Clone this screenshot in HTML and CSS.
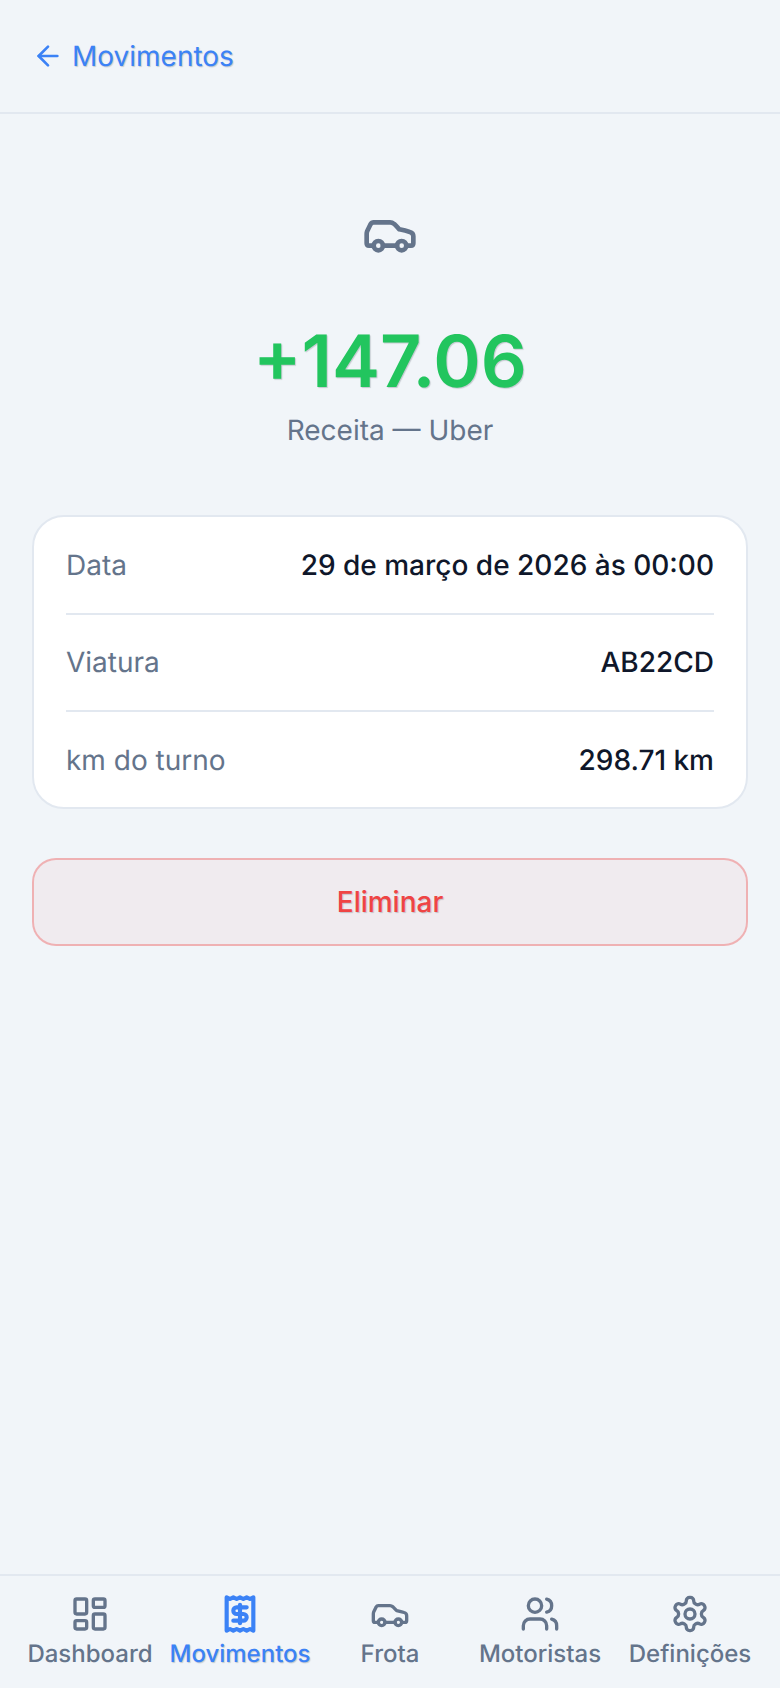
FILE: index.html
```html
<!DOCTYPE html>
<html lang="pt">
<head>
  <meta charset="UTF-8">
  <meta name="viewport" content="width=device-width, initial-scale=1.0">
  <title>Movimento</title>
  <link rel="stylesheet" href="styles.css">
</head>
<body>
  <header class="top-bar">
    <a class="back-link" href="#">
      <svg class="back-icon" viewBox="0 0 24 24"><path d="m12 19-7-7 7-7"/><path d="M19 12H5"/></svg>
      <span>Movimentos</span>
    </a>
  </header>

  <main class="content">
    <section class="hero">
      <svg class="hero-icon" viewBox="0 0 24 24">
        <path d="M19 17h2c.6 0 1-.4 1-1v-3c0-.9-.7-1.7-1.5-1.9C18.7 10.6 16 10 16 10s-1.3-1.4-2.2-2.3c-.5-.4-1.1-.7-1.8-.7H5c-.6 0-1.1.4-1.4.9l-1.4 2.9A3.7 3.7 0 0 0 2 12v4c0 .6.4 1 1 1h2"/><circle cx="7" cy="17" r="2"/><path d="M9 17h6"/><circle cx="17" cy="17" r="2"/>
      </svg>
      <div class="amount">+147.06</div>
      <div class="subtitle">Receita — Uber</div>
    </section>

    <section class="details-card">
      <div class="detail-row">
        <span class="detail-label">Data</span>
        <span class="detail-value">29 de março de 2026 às 00:00</span>
      </div>
      <div class="detail-row">
        <span class="detail-label">Viatura</span>
        <span class="detail-value">AB22CD</span>
      </div>
      <div class="detail-row">
        <span class="detail-label">km do turno</span>
        <span class="detail-value">298.71 km</span>
      </div>
    </section>

    <button type="button" class="delete-button">Eliminar</button>
  </main>

  <nav class="tab-bar">
    <a class="tab" href="#">
      <svg class="tab-icon" viewBox="0 0 24 24"><rect x="3" y="3" width="7" height="9" rx="1"/><rect x="14" y="3" width="7" height="5" rx="1"/><rect x="14" y="12" width="7" height="9" rx="1"/><rect x="3" y="16" width="7" height="5" rx="1"/></svg>
      <span>Dashboard</span>
    </a>
    <a class="tab active" href="#">
      <svg class="tab-icon" viewBox="0 0 24 24"><path d="M4 2v20l2-1 2 1 2-1 2 1 2-1 2 1 2-1 2 1V2l-2 1-2-1-2 1-2-1-2 1-2-1-2 1Z"/><path d="M16 8h-6a2 2 0 1 0 0 4h4a2 2 0 1 1 0 4H8"/><path d="M12 17.5v-11"/></svg>
      <span>Movimentos</span>
    </a>
    <a class="tab" href="#">
      <svg class="tab-icon" viewBox="0 0 24 24"><path d="M19 17h2c.6 0 1-.4 1-1v-3c0-.9-.7-1.7-1.5-1.9C18.7 10.6 16 10 16 10s-1.3-1.4-2.2-2.3c-.5-.4-1.1-.7-1.8-.7H5c-.6 0-1.1.4-1.4.9l-1.4 2.9A3.7 3.7 0 0 0 2 12v4c0 .6.4 1 1 1h2"/><circle cx="7" cy="17" r="2"/><path d="M9 17h6"/><circle cx="17" cy="17" r="2"/></svg>
      <span>Frota</span>
    </a>
    <a class="tab" href="#">
      <svg class="tab-icon" viewBox="0 0 24 24"><path d="M16 21v-2a4 4 0 0 0-4-4H6a4 4 0 0 0-4 4v2"/><circle cx="9" cy="7" r="4"/><path d="M22 21v-2a4 4 0 0 0-3-3.87"/><path d="M16 3.13a4 4 0 0 1 0 7.75"/></svg>
      <span>Motoristas</span>
    </a>
    <a class="tab" href="#">
      <svg class="tab-icon" viewBox="0 0 24 24"><path d="M12.22 2h-.44a2 2 0 0 0-2 2v.18a2 2 0 0 1-1 1.73l-.43.25a2 2 0 0 1-2 0l-.15-.08a2 2 0 0 0-2.73.73l-.22.38a2 2 0 0 0 .73 2.73l.15.1a2 2 0 0 1 1 1.72v.51a2 2 0 0 1-1 1.74l-.15.09a2 2 0 0 0-.73 2.73l.22.38a2 2 0 0 0 2.73.73l.15-.08a2 2 0 0 1 2 0l.43.25a2 2 0 0 1 1 1.73V20a2 2 0 0 0 2 2h.44a2 2 0 0 0 2-2v-.18a2 2 0 0 1 1-1.73l.43-.25a2 2 0 0 1 2 0l.15.08a2 2 0 0 0 2.73-.73l.22-.39a2 2 0 0 0-.73-2.73l-.15-.08a2 2 0 0 1-1-1.74v-.5a2 2 0 0 1 1-1.74l.15-.09a2 2 0 0 0 .73-2.73l-.22-.38a2 2 0 0 0-2.73-.73l-.15.08a2 2 0 0 1-2 0l-.43-.25a2 2 0 0 1-1-1.73V4a2 2 0 0 0-2-2z"/><circle cx="12" cy="12" r="3"/></svg>
      <span>Definições</span>
    </a>
  </nav>
</body>
</html>
```

FILE: styles.css
```css
* {
  box-sizing: border-box;
}
body {
  font-family: Inter, "Liberation Sans", sans-serif;
  text-rendering: geometricPrecision;
  background-color: #f1f5f9;
  color: #0f172a;
  margin: 0;
  height: 100vh;
  overflow: hidden;
  display: flex;
  flex-direction: column;
}
svg {
  fill: none;
  stroke: currentColor;
  stroke-width: 2;
  stroke-linecap: round;
  stroke-linejoin: round;
  flex-shrink: 0;
}
a {
  text-decoration: none;
  color: inherit;
}
.top-bar {
  height: 114px;
  padding: 0 32px;
  display: flex;
  align-items: center;
  border-bottom: 2px solid #e2e8f0;
}
.back-link {
  display: flex;
  align-items: center;
  gap: 8px;
  color: #3b82f6;
  font-size: 28px;
  font-weight: 400;
  text-shadow: 1px 1px 1px rgba(15, 23, 42, 0.2);
}
.back-icon {
  width: 32px;
  height: 32px;
}
.content {
  flex: 1;
  padding: 0 32px;
}
.hero {
  display: flex;
  flex-direction: column;
  align-items: center;
  padding-top: 92px;
  margin-bottom: 68px;
}
.hero-icon {
  width: 56px;
  height: 56px;
  color: #64748b;
  margin-bottom: 56px;
}
.amount {
  color: #22c55e;
  font-size: 72px;
  font-weight: 600;
  line-height: 88px;
  text-shadow: 1px 1px 1px rgba(15, 23, 42, 0.2);
}
.subtitle {
  color: #64748b;
  font-size: 28px;
  line-height: 34px;
  margin-top: 7px;
}
.details-card {
  background-color: #fff;
  border: 2px solid #e2e8f0;
  border-radius: 32px;
  padding: 0 32px;
}
.detail-row {
  height: 97.5px;
  display: flex;
  justify-content: space-between;
  align-items: center;
  font-size: 28px;
  border-bottom: 2px solid #e2e8f0;
}
.detail-row:last-child {
  height: 95px;
  border-bottom: none;
}
.detail-label {
  color: #64748b;
}
.detail-value {
  font-weight: 500;
}
.delete-button {
  width: 100%;
  height: 88px;
  margin-top: 49px;
  background-color: rgba(239, 68, 68, 0.05);
  border: 2px solid rgba(239, 68, 68, 0.35);
  border-radius: 24px;
  color: #ef4444;
  font-family: inherit;
  font-size: 28px;
  font-weight: 500;
  text-shadow: 1px 1px 1px rgba(15, 23, 42, 0.2);
}
.tab-bar {
  display: flex;
  padding: 18px 15px 20px;
  border-top: 2px solid #e2e8f0;
}
.tab {
  flex: 1;
  display: flex;
  flex-direction: column;
  align-items: center;
  gap: 5px;
  color: #64748b;
  font-size: 24px;
  font-weight: 500;
  line-height: 29px;
  white-space: nowrap;
}
.tab.active {
  color: #3b82f6;
  text-shadow: 1px 1px 1px rgba(15, 23, 42, 0.2);
}
.tab-icon {
  width: 40px;
  height: 40px;
}
.tab.active .tab-icon {
  stroke-width: 2.5;
}
```
